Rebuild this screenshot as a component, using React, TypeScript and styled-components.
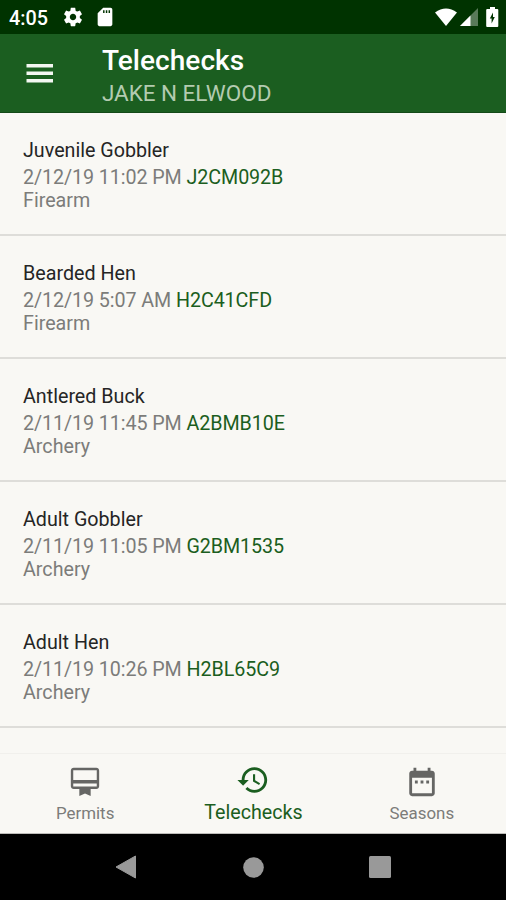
import React from 'react';
import styled, { createGlobalStyle } from 'styled-components';

const GlobalStyle = createGlobalStyle`
  * { box-sizing: border-box; }
  body { margin: 0; background: #000; font-family: Roboto, "Liberation Sans", sans-serif; }
`;

const Screen = styled.div`
  display: flex;
  flex-direction: column;
  width: 506px;
  height: 900px;
  overflow: hidden;
  background: #f9f8f4;
`;

const StatusBar = styled.div`
  display: flex;
  justify-content: space-between;
  align-items: center;
  flex: none;
  height: 34px;
  padding: 0 3px 0 9px;
  background: #003300;
  color: #fff;
`;

const StatusGroup = styled.div<{ $gap: number }>`
  display: flex;
  align-items: center;
  gap: ${(p) => p.$gap}px;
`;

const Clock = styled.span`
  width: 40px;
  margin-right: 3px;
  padding-top: 3px;
  font-size: 19.8px;
  line-height: 24px;
  font-weight: 500;
  white-space: nowrap;
`;

const Icon = styled.svg`
  display: block;
  flex: none;
  fill: currentColor;
`;

const AppBar = styled.header`
  display: flex;
  align-items: center;
  flex: none;
  height: 79px;
  padding-left: 23px;
  background: #1b5e20;
  border-bottom: 1px solid #144a18;
  color: #fff;
`;

const MenuButton = styled.button`
  display: flex;
  margin: 0 45px 0 0;
  padding: 0;
  border: 0;
  background: none;
  color: #f4f7f2;
`;

const Heading = styled.div`
  padding-top: 8px;
`;

const Title = styled.h1`
  margin: 0;
  font-size: 28px;
  line-height: 33px;
  font-weight: 500;
  letter-spacing: 0.05px;
`;

const Subtitle = styled.div`
  font-size: 22.5px;
  line-height: 33px;
  letter-spacing: -0.05px;
  color: #b3cbb0;
`;

const List = styled.ul`
  flex: 1;
  min-height: 0;
  overflow: hidden;
  margin: 0;
  padding: 0;
  list-style: none;
`;

const Row = styled.li`
  height: 123px;
  padding: 26px 23px 0;
  border-bottom: 2px solid #deddd9;
  font-size: 19.7px;
  line-height: 23px;
  color: #7c7c7a;
`;

const Species = styled.div`
  margin-bottom: 4px;
  color: #252525;
`;

const Meta = styled.div`
  letter-spacing: -0.08px;
`;

const Code = styled.span`
  color: #1b5e20;
`;

const Tabs = styled.nav`
  display: grid;
  grid-template-columns: repeat(3, 1fr);
  flex: none;
  height: 81px;
  padding-left: 1px;
  border-top: 1px solid #f1f0ec;
  border-bottom: 1px solid #bdbcb9;
`;

const Tab = styled.div<{ $active?: boolean }>`
  display: flex;
  flex-direction: column;
  align-items: center;
  padding-top: ${(p) => (p.$active ? 9 : 11)}px;
  color: ${(p) => (p.$active ? '#1b5e20' : '#666664')};
`;

const TabLabel = styled.span<{ $active?: boolean }>`
  margin-top: ${(p) => (p.$active ? 4 : 3)}px;
  font-size: ${(p) => (p.$active ? 19.7 : 16.9)}px;
  line-height: 23px;
  color: ${(p) => (p.$active ? '#1b5e20' : '#7c7c7a')};
`;

const SystemBar = styled.div`
  display: grid;
  grid-template-columns: repeat(3, 127px);
  justify-content: center;
  justify-items: center;
  align-items: center;
  flex: none;
  height: 66px;
  background: #000;
  color: #999;
`;

const tabIcons = {
  permits:
    'M20 2H4c-1.11 0-2 .89-2 2v11c0 1.11.89 2 2 2h4v4.800l4-1.600 4 1.600V17h4c1.110 0 2-.89 2-2V4c0-1.110-.89-2-2-2zm.3 13.200H3.700V13h16.600v2.200zm0-4.700H3.700V3.700h16.600v6.800z',
  history:
    'M13 3c-4.97 0-9 4.03-9 9H1l3.89 3.89.07.14L9 12H6c0-3.87 3.13-7 7-7s7 3.13 7 7-3.13 7-7 7c-1.93 0-3.68-.79-4.94-2.06l-1.42 1.42C8.27 19.99 10.51 21 13 21c4.97 0 9-4.03 9-9s-4.03-9-9-9zm-1 5v5l4.28 2.54.72-1.21-3.5-2.08V8H12z',
  seasons:
    'M9 11H7v2h2v-2zm4 0h-2v2h2v-2zm4 0h-2v2h2v-2zm2-7h-1V2h-2v2H8V2H6v2H5c-1.11 0-1.99.9-1.99 2L3 20c0 1.1.89 2 2 2h14c1.1 0 2-.9 2-2V6c0-1.1-.9-2-2-2zm0 16H5V9h14v11z',
};

const telechecks = [
  { species: 'Juvenile Gobbler', time: '2/12/19 11:02 PM', code: 'J2CM092B', method: 'Firearm' },
  { species: 'Bearded Hen', time: '2/12/19 5:07 AM', code: 'H2C41CFD', method: 'Firearm' },
  { species: 'Antlered Buck', time: '2/11/19 11:45 PM', code: 'A2BMB10E', method: 'Archery' },
  { species: 'Adult Gobbler', time: '2/11/19 11:05 PM', code: 'G2BM1535', method: 'Archery' },
  { species: 'Adult Hen', time: '2/11/19 10:26 PM', code: 'H2BL65C9', method: 'Archery' },
];

const tabs = [
  { label: 'Permits', icon: tabIcons.permits, active: false },
  { label: 'Telechecks', icon: tabIcons.history, active: true },
  { label: 'Seasons', icon: tabIcons.seasons, active: false },
];

export default function App() {
  return (
    <Screen>
      <GlobalStyle />
      <StatusBar>
        <StatusGroup $gap={10}>
          <Clock>4:05</Clock>
          <Icon width="22" height="22" viewBox="0 0 24 24">
            <path d="M19.43 12.98c.04-.32.07-.64.07-.98s-.03-.66-.07-.98l2.11-1.65c.19-.15.24-.42.12-.64l-2-3.46c-.12-.22-.39-.3-.61-.22l-2.49 1c-.52-.4-1.08-.73-1.69-.98l-.38-2.65C14.46 2.18 14.25 2 14 2h-4c-.25 0-.46.18-.49.42l-.38 2.65c-.61.25-1.17.59-1.69.98l-2.49-1c-.23-.09-.49 0-.61.22l-2 3.46c-.13.22-.07.49.12.64l2.11 1.65c-.04.32-.07.65-.07.98s.03.66.07.98l-2.11 1.65c-.19.15-.24.42-.12.64l2 3.46c.12.22.39.3.61.22l2.49-1c.52.4 1.08.73 1.69.98l.38 2.65c.03.24.24.42.49.42h4c.25 0 .46-.18.49-.42l.38-2.65c.61-.25 1.17-.59 1.69-.98l2.49 1c.23.09.49 0 .61-.22l2-3.46c.12-.22.07-.49-.12-.64l-2.11-1.65zM12 15.5c-1.93 0-3.5-1.57-3.5-3.5s1.57-3.5 3.5-3.5 3.5 1.57 3.5 3.5-1.57 3.5-3.5 3.5z" />
          </Icon>
          <Icon width="22" height="22" viewBox="0 0 24 24">
            <path d="M18 2h-8L4 8v12c0 1.100.9 2 2 2h12c1.100 0 2-.9 2-2V4c0-1.100-.9-2-2-2zm-6.500 5.500h-1.600v-3h1.600v3zm3 0h-1.600v-3h1.600v3zm3 0h-1.600v-3h1.600v3z" />
          </Icon>
        </StatusGroup>
        <StatusGroup $gap={3}>
          <Icon width="22" height="18" viewBox="0 0 22 18">
            <path d="M0 4.500Q11-3.500 22 4.500L11 18z" />
          </Icon>
          <Icon width="18" height="18" viewBox="0 0 18 18">
            <path d="M18 0v18H0z" opacity=".35" />
            <path d="M10.500 7.500V18H0z" />
          </Icon>
          <Icon width="22" height="20" viewBox="0 0 22 20">
            <path
              fillRule="evenodd"
              d="M9 0h5v2h2.300q1 0 1 1v16q0 1-1 1H6.200q-1 0-1-1V3q0-1 1-1H9zM12 5.500l-3.200 6h1.800v5l3.200-6.500H12z"
            />
          </Icon>
        </StatusGroup>
      </StatusBar>
      <AppBar>
        <MenuButton aria-label="Menu">
          <Icon width="34" height="34" viewBox="0 0 34 34">
            <path d="M3.500 8h26.500v3.500h-26.500zM3.500 15.500h26.500v3.500h-26.500zM3.500 23h26.500v3.500h-26.500z" />
          </Icon>
        </MenuButton>
        <Heading>
          <Title>Telechecks</Title>
          <Subtitle>JAKE N ELWOOD</Subtitle>
        </Heading>
      </AppBar>
      <List>
        {telechecks.map((t) => (
          <Row key={t.code}>
            <Species>{t.species}</Species>
            <Meta>
              {t.time} <Code>{t.code}</Code>
            </Meta>
            <div>{t.method}</div>
          </Row>
        ))}
      </List>
      <Tabs>
        {tabs.map((t) => (
          <Tab key={t.label} $active={t.active}>
            <Icon width="34" height="34" viewBox="0 0 24 24">
              <path d={t.icon} />
            </Icon>
            <TabLabel $active={t.active}>{t.label}</TabLabel>
          </Tab>
        ))}
      </Tabs>
      <SystemBar>
        <Icon width="22" height="24" viewBox="0 0 22 24">
          <path d="M20.500 1v22L1 12z" stroke="currentColor" strokeLinejoin="round" />
        </Icon>
        <Icon width="21" height="21" viewBox="0 0 21 21">
          <circle cx="10.500" cy="10.500" r="10.300" />
        </Icon>
        <Icon width="22" height="22" viewBox="0 0 22 22">
          <rect width="22" height="22" rx="1.500" />
        </Icon>
      </SystemBar>
    </Screen>
  );
}
